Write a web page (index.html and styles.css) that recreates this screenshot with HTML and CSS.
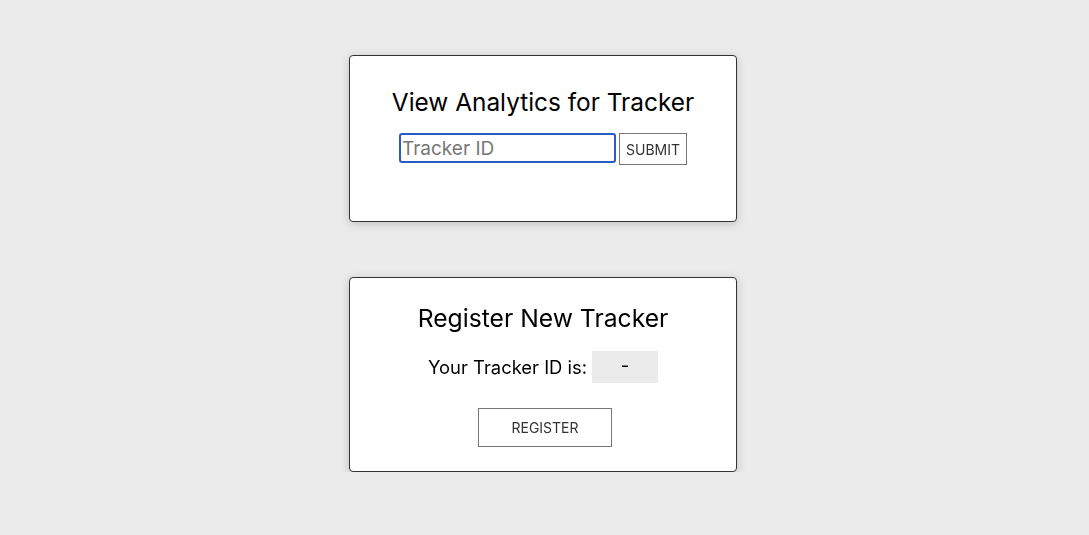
FILE: index.html
```html
<!DOCTYPE html>
<html>
<head>
<meta charset="utf-8">
<link rel="stylesheet" href="styles.css">
</head>
<body>
<main class="page">
  <section class="card card-view">
    <h2 class="card-title">View Analytics for Tracker</h2>
    <form class="lookup">
      <input class="tracker-input" type="text" placeholder="Tracker ID" autofocus>
      <button class="btn btn-submit" type="button">SUBMIT</button>
    </form>
  </section>
  <section class="card card-register">
    <h2 class="card-title title-register">Register New Tracker</h2>
    <div class="id-row">
      <span class="id-label">Your Tracker ID is:</span>
      <span class="id-value">-</span>
    </div>
    <button class="btn btn-register" type="button">REGISTER</button>
  </section>
</main>
</body>
</html>
```
FILE: styles.css
```css
html, body {
  margin: 0;
  padding: 0;
  background: #ebebeb;
  font-family: Inter, "Liberation Sans", sans-serif;
  color: #000;
}
.page {
  display: flex;
  flex-direction: column;
  align-items: center;
  gap: 55px;
  padding: 55px 3px 0 0;
}
.card {
  box-sizing: border-box;
  width: 388px;
  background: #fff;
  border: 1px solid #333;
  border-radius: 4px;
  box-shadow: 0 2px 10px rgba(0,0,0,0.18);
  display: flex;
  flex-direction: column;
  align-items: center;
}
.card-view {
  height: 167px;
  padding-top: 31px;
}
.card-register {
  height: 195px;
  padding-top: 25px;
}
.card-title {
  margin: 0;
  font-size: 24.4px;
  font-weight: 400;
  line-height: 30px;
}
.title-register {
  font-size: 24.7px;
}
.lookup {
  display: flex;
  align-items: flex-start;
  gap: 3px;
  margin: 16px 0 0 0;
}
.tracker-input {
  box-sizing: border-box;
  width: 217px;
  height: 30px;
  border: 2px solid #2a5ac8;
  border-radius: 3px;
  outline: none;
  padding: 0 1px;
  font-family: inherit;
  font-size: 19px;
  color: #000;
}
.tracker-input::placeholder {
  color: #777;
}
.btn {
  box-sizing: border-box;
  background: #fff;
  border: 1px solid #777;
  border-radius: 0;
  font-family: inherit;
  color: #333;
  padding: 0;
}
.btn-submit {
  width: 68px;
  height: 32px;
  font-size: 14px;
}
.id-row {
  display: flex;
  align-items: center;
  gap: 5px;
  margin-top: 18px;
  font-size: 18.4px;
}
.id-value {
  width: 66px;
  height: 32px;
  background: #ebebeb;
  display: flex;
  align-items: center;
  justify-content: center;
  padding-bottom: 4px;
  box-sizing: border-box;
}
.btn-register {
  margin: 25px 0 0 4px;
  width: 134px;
  height: 39px;
  font-size: 14px;
}
```
